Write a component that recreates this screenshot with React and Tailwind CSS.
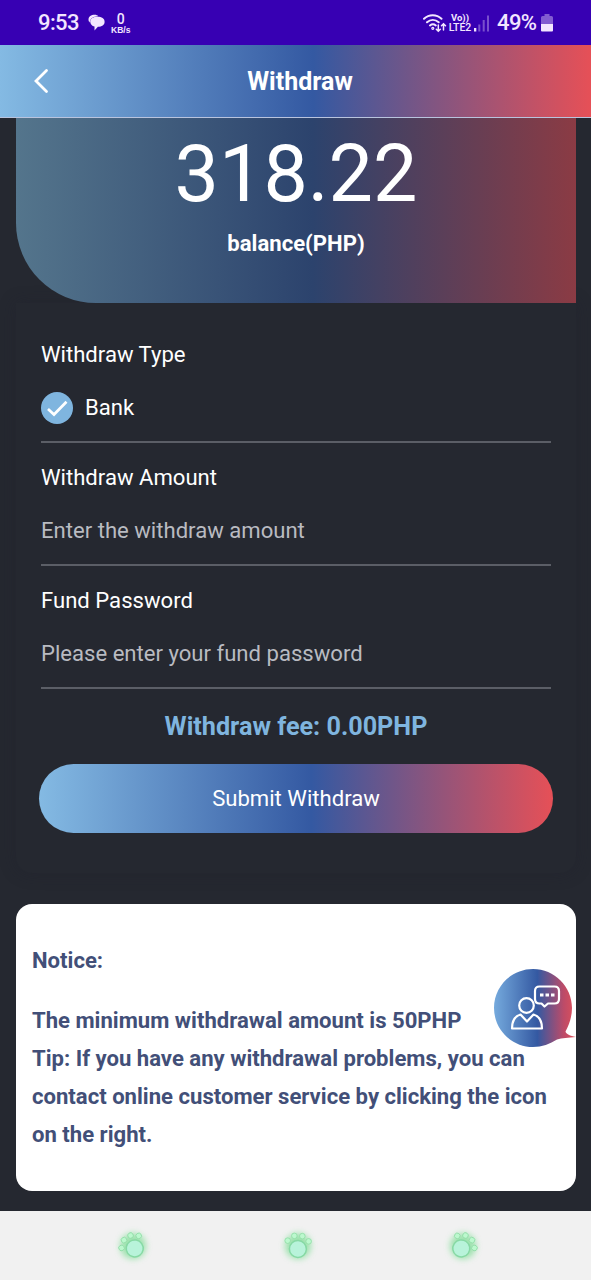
import { useState } from "react";

const paws = [
  { id: "recent", rotate: -35 },
  { id: "home", rotate: 2 },
  { id: "back", rotate: 35 },
];

const noticeLines = [
  "The minimum withdrawal amount is 50PHP",
  "Tip: If you have any withdrawal problems, you can",
  "contact online customer service by clicking the icon",
  "on the right.",
];

const StatusBar = () => (
  <div className="flex h-[45px] items-center justify-between bg-[#3700b3] pr-[38px] pl-[38px] text-[#f3e6ff]">
    <div className="flex items-center">
      <span className="w-[41px] whitespace-nowrap text-[22px] leading-none font-medium tracking-[-0.6px]">9:53</span>
      <svg className="ml-[9px]" width="17" height="17" viewBox="0 0 17 17" fill="currentColor">
        <path d="M6.800.8C3 .8.5 2.700.5 5.500c0 1.300.5 2.300 1.200 3.100C2 4.500 5 2.600 10.300 2.300 9.500 1.300 8.200.8 6.800.8Z" />
        <path d="M9.500 2.700C5.400 2.700 2.200 4.400 2.200 7.600c0 2.700 1.800 4.500 4.300 5v3.900l3.400-3.700c4-.1 6.700-1.900 6.700-5.100C16.600 4.500 13.700 2.700 9.500 2.700Z" />
      </svg>
      <div className="ml-[6px] flex flex-col items-center font-medium">
        <span className="text-[14px] leading-[14px]">0</span>
        <span className="font-['Liberation_Sans'] text-[8.500px] leading-[8px] font-bold">KB/s</span>
      </div>
    </div>
    <div className="flex items-center">
      <svg width="24" height="20" viewBox="0 0 24 20" fill="none" stroke="currentColor" strokeWidth="2" strokeLinecap="round">
        <path d="M1 5.800C6 1 13.500 1 18.500 5.800M4 9.300c3.500-3.200 8.200-3.200 11.700 0M7 12.400c1.800-1.500 4-1.500 5.800 0" />
        <circle cx="9.800" cy="15.300" r=".6" />
        <path strokeWidth="1.500" d="M15.300 12v6M13.300 16.200l2 2 2-2M20.500 17v-6M18.500 12.800l2-2 2 2" />
      </svg>
      <div className="ml-px flex w-[24px] flex-col items-center whitespace-nowrap font-medium">
        <span className="text-[9.500px] leading-[11px] font-bold">Vo))</span>
        <span className="text-[10.500px] leading-[10px]">LTE2</span>
      </div>
      <svg className="ml-[2px]" width="18" height="18" viewBox="0 0 18 18" fill="currentColor">
        <rect x="0" y="14" width="2.300" height="3.500" />
        <g opacity=".35">
          <rect x="4.300" y="10.500" width="2" height="7" />
          <rect x="8.700" y="6" width="2" height="11.500" />
          <rect x="13" y="1.500" width="2" height="16" />
        </g>
      </svg>
      <span className="ml-[5px] w-[43px] whitespace-nowrap text-[22px] leading-none font-medium tracking-[-0.6px]">49%</span>
      <svg className="ml-[1px]" width="12" height="18" viewBox="0 0 12 18" fill="currentColor">
        <path opacity=".4" d="M3.500 0h5v2h2q1.500 0 1.500 1.500V10H0V3.500Q0 2 1.500 2h2Z" />
        <path d="M0 10h12v6.500q0 1-1 1H1q-1 0-1-1Z" />
      </svg>
    </div>
  </div>
);

const Header = () => (
  <header className="grid h-[73px] grid-cols-[83px_1fr_74px] items-center border-b border-[#b9c4de] bg-linear-[90deg,#84bae3_0%,#3459a2_53%,#e65057_100%] text-white">
    <button aria-label="Back" className="pl-[33px]">
      <svg width="16" height="26" viewBox="0 0 16 26" fill="none" stroke="currentColor" strokeWidth="2.800" strokeLinecap="round">
        <path d="M13.500 2.500 3 13l10.500 10.500" />
      </svg>
    </button>
    <h1 className="pt-px text-center text-[25px] font-bold">Withdraw</h1>
  </header>
);

const Field = ({ label, children }) => (
  <div className="flex h-[123px] flex-col border-b-2 border-[#5b5e66]">
    <label className="mt-[18px] text-[22.100px] leading-8">{label}</label>
    <div className="mt-[22px] flex h-8 items-center">{children}</div>
  </div>
);

const SupportIcon = () => (
  <svg width="83" height="82" viewBox="0 0 83 82" fill="none">
    <defs>
      <linearGradient id="support" x1="0" x2="1">
        <stop offset="0" stopColor="#75aadd" />
        <stop offset=".53" stopColor="#3459a2" />
        <stop offset=".85" stopColor="#bd4b68" />
        <stop offset="1" stopColor="#df5059" />
      </linearGradient>
    </defs>
    <path fill="url(#support)" d="M40 1C18.500 1 1 18.500 1 40s17.500 39 39 39c9 0 17-3 24-7.500 5-1.500 11-2 19-2.500-6-1-10-3-10.500-5.500C76 57 79 49 79 40 79 18.500 61.500 1 40 1Z" />
    <g stroke="#fff" strokeWidth="2.200" strokeLinejoin="round">
      <circle cx="33.500" cy="37.500" r="7.300" />
      <path d="M19 60.500c0-7 3-12.500 8.500-14l6.500 7 6.500-7c5.500 1.500 8.500 7 8.500 14Z" />
      <path d="M46.500 18.500h15q4.500 0 4.500 4.500v8q0 4.500-4.500 4.500h-6.500l-3.500 3-3-3h-2q-4.500 0-4.500-4.500v-8q0-4.500 4.500-4.500Z" />
    </g>
    <path stroke="#fff" strokeWidth="3" d="M47 27h3.500M52.500 27H56M58 27h3.500" />
  </svg>
);

const Paw = ({ rotate }) => (
  <svg width="44" height="44" viewBox="-22 -22 44 44">
    <circle r="13" fill="#79dc91" opacity=".7" className="blur-[3px]" />
    <g transform={`rotate(${rotate})`}>
      <circle cy="3" r="8.500" fill="#b8f3da" stroke="#86d9a4" strokeWidth="1.500" />
      {[[-10.500, -5], [-4, -10], [4, -10], [10.500, -5]].map(([x, y]) => (
        <circle key={x} cx={x} cy={y} r="2.800" fill="#bcf8ce" stroke="#8fdca5" strokeWidth=".8" />
      ))}
    </g>
  </svg>
);

const App = () => {
  const [amount, setAmount] = useState("");
  const [password, setPassword] = useState("");

  return (
    <div className="flex h-[1280px] w-full flex-col overflow-hidden bg-[#252830] font-[Roboto,sans-serif] text-white">
      <StatusBar />
      <Header />
      <main className="flex h-[1093px] flex-col pr-[15px] pl-4">
        <section className="z-10 flex h-[185px] flex-col items-center rounded-bl-[80px] bg-linear-[90deg,#54758c_0%,#2c436d_53%,#8b3b44_100%]">
          <p className="mt-[10px] text-[79px] leading-[92px]">318.22</p>
          <p className="mt-[7px] text-[22.100px] leading-8 font-bold">balance(PHP)</p>
        </section>

        <section className="flex h-[570px] flex-col rounded-b-2xl px-[25px] pt-[17px] shadow-[0_0_16px_rgba(32,32,44,0.4)]">
          <Field label="Withdraw Type">
            <svg width="32" height="32" viewBox="0 0 32 32">
              <circle cx="16" cy="16" r="16" fill="#7fb5df" />
              <path d="m7 17 6 5.500L25.500 9.800" fill="none" stroke="#fff" strokeWidth="2.700" />
            </svg>
            <span className="-mt-px ml-3 text-[22.100px]">Bank</span>
          </Field>
          <Field label="Withdraw Amount">
            <input
              value={amount}
              onChange={(e) => setAmount(e.target.value)}
              placeholder="Enter the withdraw amount"
              className="-mt-px w-full text-[22.100px] outline-none placeholder:text-[#b9bbc1]"
            />
          </Field>
          <Field label="Fund Password">
            <input
              type="password"
              value={password}
              onChange={(e) => setPassword(e.target.value)}
              placeholder="Please enter your fund password"
              className="-mt-px w-full text-[22.100px] outline-none placeholder:text-[#b9bbc1]"
            />
          </Field>
          <p className="mt-[20px] text-center text-[25.200px] leading-9 font-bold text-[#7fb5df]">Withdraw fee: 0.00PHP</p>
          <button className="-mx-[2px] mt-[19px] h-[69px] shrink-0 rounded-full bg-linear-[90deg,#84bae3_0%,#3459a2_53%,#e65057_100%] text-[22.100px]">
            Submit Withdraw
          </button>
        </section>

        <section className="relative mt-[31px] h-[287px] rounded-2xl bg-white px-4 pt-[37px] text-[22.100px] leading-[38px] font-bold text-[#424f78]">
          <h2 className="mb-[22px]">Notice:</h2>
          {noticeLines.map((line) => (
            <p key={line} className="whitespace-nowrap">{line}</p>
          ))}
          <button aria-label="Customer service" className="absolute top-[64px] right-0">
            <SupportIcon />
          </button>
        </section>
      </main>
      <nav className="grid h-[69px] grid-cols-3 bg-[#f1f1f1] pr-[46px] pl-[50px]">
        {paws.map((paw) => (
          <button key={paw.id} aria-label={paw.id} className="flex items-center justify-center">
            <Paw rotate={paw.rotate} />
          </button>
        ))}
      </nav>
    </div>
  );
};

export default App;
